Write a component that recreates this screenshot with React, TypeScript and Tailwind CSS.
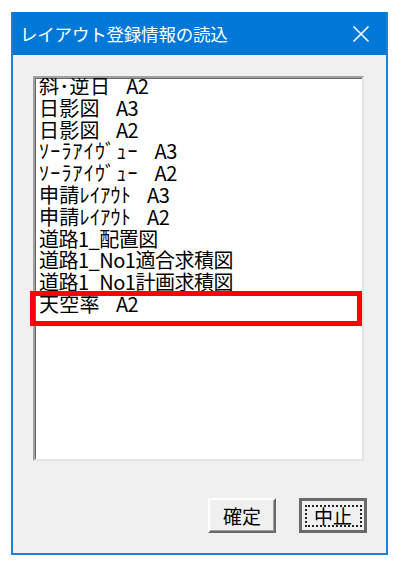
import React from 'react'

const ITEMS: { name: string; size?: string; kana?: boolean }[] = [
  { name: '斜･逆日', size: 'A2' },
  { name: '日影図', size: 'A3' },
  { name: '日影図', size: 'A2' },
  { name: 'ｿｰﾗｱｲｳﾞｭｰ', size: 'A3', kana: true },
  { name: 'ｿｰﾗｱｲｳﾞｭｰ', size: 'A2', kana: true },
  { name: '申請ﾚｲｱｳﾄ', size: 'A3' },
  { name: '申請ﾚｲｱｳﾄ', size: 'A2' },
  { name: '道路1_配置図' },
  { name: '道路1_No1適合求積図' },
  { name: '道路1_No1計画求積図' },
  { name: '天空率', size: 'A2' },
]

const font = { fontFamily: '"Noto Sans CJK JP", "Noto Sans", sans-serif' }

export default function App() {
  return (
    <div className="w-[401px] h-[566px] bg-white pt-[12px] pl-[11px]" style={font}>
      <div className="w-[377px] h-[543px] flex flex-col border-2 border-t-0 border-[#1f80d8]">
        {/* title bar */}
        <div className="h-[43px] shrink-0 bg-[#0078d7] flex items-center justify-between pl-[7px] pr-[16px]">
          <span className="text-white text-[17.5px] leading-none tracking-[-0.2px]">レイアウト登録情報の読込</span>
          <svg width="18" height="18" viewBox="0 0 18 18" className="text-white">
            <path d="M1.5 1.5 L16.5 16.5 M16.5 1.5 L1.5 16.5" stroke="currentColor" strokeWidth="1.6" />
          </svg>
        </div>

        {/* body */}
        <div className="relative flex-1 bg-[#f0f0f0] pt-[21px] pl-[20px]">
          <div className="w-[331px] h-[385px] bg-white overflow-hidden border-2 border-t-[#a0a0a0] border-l-[#a0a0a0] border-r-[#e3e3e3] border-b-[#e3e3e3] shadow-[inset_1px_1px_0_#696969]">
            <div className="-mt-[3px] pl-[4px]">
              {ITEMS.map((item, i) => (
                <div key={i} className="h-[21.8px] leading-[21.8px] text-[20px] text-black whitespace-nowrap tracking-[-0.5px] flex">
                  <span className={item.kana ? 'tracking-[1.2px]' : item.size ? 'tracking-[0.3px]' : ''}>{item.name}</span>
                  {item.size && <span className="ml-[16px]">{item.size}</span>}
                </div>
              ))}
            </div>
          </div>

          <div className="mt-[37px] pl-[175px] flex gap-[23px]">
            <button className="w-[68px] h-[35px] bg-[#f0f0f0] border-2 border-t-white border-l-white border-r-[#696969] border-b-[#696969] shadow-[inset_-1px_-1px_0_#a0a0a0] text-[19px] leading-none text-black flex items-center justify-center">
              確定
            </button>
            <button className="w-[68px] h-[35px] bg-[#f0f0f0] border-[3px] border-[#6a6a6a] text-[19px] leading-none text-black flex items-center justify-center">
              <span className="w-[57px] h-[22px] border-2 border-dotted border-[#222] flex items-center justify-center">
                中止
              </span>
            </button>
          </div>

          {/* highlight frame */}
          <div className="absolute left-[17px] top-[236px] w-[332px] h-[35px] border-[5px] border-[#ff0000]" />
        </div>
      </div>
    </div>
  )
}
